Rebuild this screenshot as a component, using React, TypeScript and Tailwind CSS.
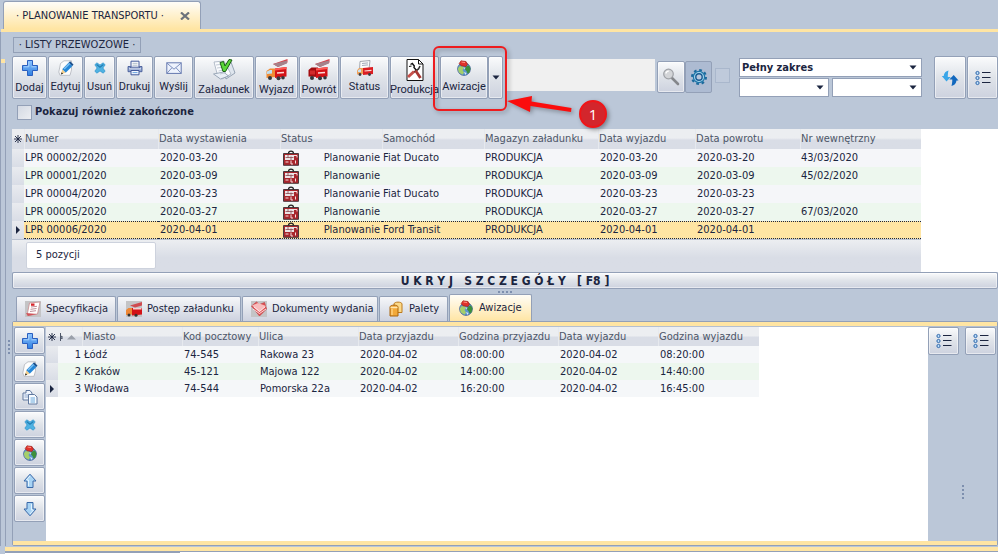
import { useState } from 'react';
import type { ReactNode } from 'react';

/* ---------- icons ---------- */

const PlusIcon = () => (
  <svg viewBox="0 0 18 18" className="w-[18px] h-[18px]">
    <defs>
      <linearGradient id="plusFill" x1="0" y1="0" x2="0" y2="1">
        <stop offset="0" stopColor="#8cc4ff" />
        <stop offset="1" stopColor="#2f7fe0" />
      </linearGradient>
    </defs>
    <path d="M6.5 1.5h5v5h5v5h-5v5h-5v-5h-5v-5h5z" fill="url(#plusFill)" stroke="#2a5fc0" strokeLinejoin="round" />
    <path d="M7.8 3v4.8H3M10.4 7.8H15" fill="none" stroke="#b5dcff" strokeWidth="0.8" />
  </svg>
);

const EditIcon = () => (
  <svg viewBox="0 0 16 16" className="w-4 h-4">
    <path d="M2.5 3.5 6 .8h7.5v9L12 15.3H2L.8 12z" fill="#fdfdfd" stroke="#b0b4bb" strokeWidth="0.8" />
    <path d="m4.2 9.3 6.6-6.9 3.6 3.5-6.7 6.8z" fill="#2587d8" />
    <path d="m5.6 8.6 6-6.2 1 1-6 6.2z" fill="#7cc0f2" />
    <path d="m10.8 2.4 1.3-1.1 3.4 3.3-1.1 1.3z" fill="#1a4f8c" />
    <path d="m4.2 9.3 3.5 3.4-4.6 1.6z" fill="#f3cf8d" />
    <path d="m3.6 12.3 1.5 1.4-2.2.8z" fill="#222" />
  </svg>
);

const CrossIcon = () => (
  <svg viewBox="0 0 14 14" className="w-3 h-4">
    <path d="M1 3.2 3.4 1 7 3.6 10.6 1 13 3.2 10.4 7 13 10.8 10.6 13 7 10.4 3.4 13 1 10.8 3.6 7z" fill="#4fb2e2" stroke="#2f93cb" strokeWidth="0.8" />
    <path d="M3 3 7 6l4-3" fill="none" stroke="#237eb4" strokeWidth="1.4" />
  </svg>
);

const PrintIcon = () => (
  <svg viewBox="0 0 16 16" className="w-4 h-4">
    <path d="M4 1.2h8v6H4z" fill="#fff" stroke="#42599a" />
    <path d="M5.5 3.3h5M5.5 5.2h5" stroke="#9ab" strokeWidth="0.8" />
    <path d="M1 6.5h2.5v2h9v-2H15v5.2H1z" fill="#8fa3cf" stroke="#3b5090" strokeWidth="0.8" />
    <path d="M2 8.8h12" stroke="#e4ebf8" />
    <path d="M4 10.5h8v4.3H4z" fill="#f2f7ff" stroke="#42599a" />
    <path d="M5.5 12.6h5" stroke="#6aa5e0" />
  </svg>
);

const MailIcon = () => (
  <svg viewBox="0 0 16 16" className="w-4 h-4">
    <rect x="0.8" y="2.8" width="14.4" height="10.6" fill="#eef3fd" stroke="#6478ae" />
    <path d="m1 3.2 7 6 7-6M1.2 13l4.7-5.2M14.8 13l-4.7-5.2" fill="none" stroke="#7184b8" strokeWidth="0.9" />
  </svg>
);

const LoadIcon = () => (
  <svg viewBox="0 0 24 24" className="w-6 h-6">
    <path d="m10 7 9-3 4 11-9 6z" fill="#dfe6ee" stroke="#8392a5" strokeWidth="0.8" />
    <path d="m2 4 10-1 7 13-9 5-4-2z" fill="#fbfcfe" stroke="#a2adbd" strokeWidth="0.8" />
    <path d="m1.500 16 7 5 8-3-5-4z" fill="#e9eef5" stroke="#8897aa" strokeWidth="0.8" />
    <path d="m4 7 4-.5M5 10l4-.5M6.500 13l5-1M8 16l6-1.500" stroke="#b2bdca" strokeWidth="0.8" />
    <path d="m8 4.500 3.500-1 1.500 4.500 4-6.500 3 .5-6.500 11.500h-2.500z" fill="#5bd63a" stroke="#1a5c14" />
  </svg>
);

const TruckOutIcon = () => (
  <svg viewBox="0 0 24 24" className="w-6 h-6">
    <path d="m8 6 14.500-5v3.500L13 9z" fill="#d8404a" />
    <path d="m8 6 14-3.500v3L13 9z" fill="#a5828a" />
    <path d="M1.500 13 5 10.500h5V19l-8.500 1z" fill="#ef8b35" />
    <path d="M2 13.500 5 12h2v3.500L2 16z" fill="#bfe0f2" />
    <path d="M10 10.500 21.500 9v9.500L10 20z" fill="#d31217" />
    <path d="m10 10.500 11.500-1.500v2L10 12.500z" fill="#ff5a54" />
    <path d="m12 15 7-.6" stroke="#ffd9d5" strokeWidth="1.500" />
    <circle cx="5" cy="20" r="2" fill="#34363c" />
    <circle cx="13.500" cy="20.300" r="2" fill="#34363c" />
    <circle cx="18" cy="19.800" r="1.800" fill="#34363c" />
  </svg>
);

const TruckInIcon = () => (
  <svg viewBox="0 0 24 24" className="w-6 h-6">
    <path d="m8 6 14.500-5v3.500L13 9z" fill="#d8404a" />
    <path d="m8 6 14-3.500v3L13 9z" fill="#a5828a" />
    <path d="m1.500 12 3-2.500H11V19l-9.500-.5z" fill="#a30d10" />
    <path d="M3 12.500h5v4H3z" fill="#d12b2b" />
    <path d="M9 10.500 20.500 9v9.500L9 20z" fill="#d31217" />
    <path d="m9 10.500 11.500-1.500v2L9 12.500z" fill="#ff5a54" />
    <path d="m11 15 7-.6" stroke="#ffd9d5" strokeWidth="1.500" />
    <circle cx="5" cy="20" r="2" fill="#34363c" />
    <circle cx="13" cy="20.300" r="2" fill="#34363c" />
    <circle cx="18" cy="19.800" r="1.800" fill="#34363c" />
  </svg>
);

const StatusIcon = () => (
  <svg viewBox="0 0 18 16" className="w-[18px] h-4">
    <path d="m4 1.500 10-1L13 9 3.500 10z" fill="#fafbfc" stroke="#8e949e" strokeWidth="0.8" />
    <path d="m6 3.500 6-.6M6 5.500l6-.6" stroke="#9aa3b2" strokeWidth="0.9" />
    <path d="M1 10.500 3 8h4v6l-6 .5z" fill="#f0a15a" />
    <path d="m2 10.500 1.500-1.300H5V12H2z" fill="#c5e4f5" />
    <path d="m7 8 10-1v7L7 15z" fill="#db1d22" />
    <path d="m8.500 11 7-.6" stroke="#ffd9d5" strokeWidth="1.200" />
    <circle cx="4" cy="14.500" r="1.400" fill="#3a3c42" />
    <circle cx="13.500" cy="14.500" r="1.400" fill="#3a3c42" />
  </svg>
);

const ProductionIcon = () => (
  <svg viewBox="0 0 24 24" className="w-6 h-6">
    <path d="M4 1.500h11.500L20 6v16.500H4z" fill="#fff" stroke="#111" />
    <path d="M15.500 1.500V6H20" fill="none" stroke="#111" />
    <path d="m7.500 6.500 1.800-1 2 2.500-.3 1.500 3 3.500" fill="none" stroke="#111" strokeWidth="1.400" />
    <path d="m17 8-1.500 3-5 3.500" fill="none" stroke="#333" strokeWidth="1.600" />
    <path d="m11 13.500-6 5.500" stroke="#c5504b" strokeWidth="3" />
    <path d="m12.500 12.500 5 7.500" stroke="#a83733" strokeWidth="2.800" />
    <path d="M6 8.500 8.500 8" stroke="#111" strokeWidth="1.200" />
  </svg>
);

const GlobeIcon = () => (
  <svg viewBox="0 0 16 16" className="w-4 h-4">
    <circle cx="8" cy="9" r="6.400" fill="#5c97cf" stroke="#33508a" strokeWidth="0.7" />
    <path d="M3 6.500 6 6l2 2-1.500 2L8 12.500l-1.500 2.300L3 12.500 1.800 9z" fill="#a5cf6a" />
    <path d="m10 6.500 3-1 1.500 3-1 4-2 1-1-2.500L9 9.500z" fill="#3c8f3c" />
    <path d="m8 12 2.500 1-1 2zM7.500 7l1.500 1-.8 1.500z" fill="#dce8f5" />
    <path d="M3.200 3.500 5 .8l5 .7 1.500 2.800L10 6.500l-5-.7z" fill="#e0332b" stroke="#97160f" strokeWidth="0.6" />
    <path d="m5.500 2 3.500.6" stroke="#ff9c8f" strokeWidth="0.9" />
  </svg>
);

const SearchIcon = () => (
  <svg viewBox="0 0 18 18" className="w-[18px] h-[18px]">
    <path d="m10 10 6 6" stroke="#85878b" strokeWidth="2.600" strokeLinecap="round" />
    <circle cx="6.500" cy="6" r="4.800" fill="#d3d5d8" stroke="#9fa2a7" strokeWidth="1.200" />
    <path d="M3.800 5.500a3 3 0 0 1 3-2.300" fill="none" stroke="#fff" strokeWidth="1.200" />
  </svg>
);

const GearIcon = () => (
  <svg viewBox="0 0 18 18" className="w-[18px] h-[18px]">
    <circle cx="9" cy="9" r="7" fill="none" stroke="#1c6a9c" strokeWidth="2" strokeDasharray="2.750 2.750" />
    <circle cx="9" cy="9" r="5.600" fill="#a5d8ef" stroke="#1f75a8" strokeWidth="1.200" />
    <circle cx="9" cy="9" r="3.200" fill="#b9c7dc" stroke="#1b5c93" strokeWidth="1.400" />
  </svg>
);

const RefreshIcon = () => (
  <svg viewBox="0 0 18 18" className="w-[18px] h-[18px]">
    <path d="M7.500 1.500C4.800 2 3 4 2.700 7H.8l4.700 5.500L9.800 8H6.800c0-2.500.2-4.500.7-6.500z" fill="#3aa6e8" />
    <path d="M10.500 17c2.700-.5 4.700-2.500 5-5.500h2L12.700 6 8.300 10.500h3c0 2.500-.3 4.500-.8 6.500z" fill="#1268be" />
  </svg>
);

const ListIcon = () => (
  <svg viewBox="0 0 16 16" className="w-4 h-4">
    {[3, 8, 13].map((y) => (
      <g key={y}>
        <circle cx="2.500" cy={y} r="1.600" fill="#bfe0fa" stroke="#2d66ab" />
        <path d={`M7 ${y - 0.5}h8.500`} stroke="#1b2540" />
      </g>
    ))}
  </svg>
);

const CopyIcon = () => (
  <svg viewBox="0 0 16 16" className="w-4 h-4">
    <path d="M1 4h3V1.500h4L10 4v7H1z" fill="#eef4fc" stroke="#60799f" />
    <path d="M2.500 6h5M2.500 8h5" stroke="#86a2c8" strokeWidth="0.9" />
    <path d="M6.500 5.500h6l2.500 2.500v7H6.500z" fill="#f7fbff" stroke="#60799f" />
    <path d="M8.500 9h4.500M8.500 11h4.500M8.500 13h4.500" stroke="#5a9fd8" strokeWidth="0.9" />
  </svg>
);

const ArrowIcon = ({ down = false }: { down?: boolean }) => (
  <svg viewBox="0 0 16 16" className={down ? 'w-4 h-4 rotate-180' : 'w-4 h-4'}>
    <path d="M8 1.200 14 8h-3v6.500H5V8H2z" fill="#a7d3f4" stroke="#3968a8" strokeLinejoin="round" />
    <path d="M8 3 4.500 7H6.500v6" fill="none" stroke="#e3f4ff" />
  </svg>
);

const CalendarIcon = () => (
  <svg viewBox="0 0 16 16" className="w-4 h-4">
    <path d="M.5 3.500h15v11.800H.5z" fill="#a8262c" stroke="#4a3a3e" />
    <path d="M5.500 3.500C5.500.3 10.500.3 10.500 3.500" fill="none" stroke="#222" strokeWidth="1.200" />
    <path d="M2 5h9v5H2z" fill="#ece4e6" />
    <path d="M2.500 7.500h8M5 5v3M8 6.500v3.500" stroke="#8d4a50" strokeWidth="0.8" />
    <path d="M11 5.500h3v2M2.500 12h3M8 10.500v3.500h2M12.500 10.500v3" stroke="#f4dede" fill="none" />
  </svg>
);

const SpecIcon = () => (
  <svg viewBox="0 0 16 16" className="w-4 h-4">
    <path d="M0 0h16v16H0z" fill="#c4c4c6" />
    <path d="M4.500 2 15 1l-2.500 12L2 14.500z" fill="#fff" stroke="#c98a8e" strokeWidth="0.8" />
    <path d="m6 6 6-.7M5.500 8.300l6-.8M5 10.500l6-.8" stroke="#b0707c" strokeWidth="0.8" />
    <path d="M6 2.500h3.500v2.300H6z" fill="#d8232a" />
    <path d="m1 12 11 1L3 15z" fill="#d0545a" />
  </svg>
);

const ProgressIcon = () => (
  <svg viewBox="0 0 16 16" className="w-4 h-4">
    <path d="M0 0h16v16H0z" fill="#c4c4c6" />
    <path d="M4 4.500 16 1v3.500L9 6.500z" fill="#cf4a50" />
    <path d="m0 9 2.500-2H6v6.500L0 14z" fill="#ee8736" />
    <path d="M6 7h10v6.500L6 14.500z" fill="#d31217" />
    <path d="M7 7.800h8.500" stroke="#fff" strokeWidth="1.200" />
    <circle cx="3" cy="14" r="1.500" fill="#333" />
    <circle cx="10" cy="14.300" r="1.500" fill="#333" />
  </svg>
);

const DocsIcon = () => (
  <svg viewBox="0 0 16 16" className="w-4 h-4">
    <path d="M0 0h16v16H0z" fill="#c4c4c6" />
    <path d="m.5 5 5-4 3 2.500 5-2 2 6.500-7 7z" fill="#e25256" stroke="#b8373b" strokeWidth="0.6" />
    <path d="M1 4.500 7 2l8 3-6.500 6z" fill="#f8bcbc" />
    <path d="m2 8 6.500 4.500L15 8M3 6l5.500 4.500L14 6" fill="none" stroke="#fff" strokeWidth="0.8" />
  </svg>
);

const PalletIcon = () => (
  <svg viewBox="0 0 16 16" className="w-4 h-4">
    <path d="M6 3c0-2.500 8-2.500 8 0v8.500H6z" fill="#fbd98a" stroke="#bd7a1c" />
    <path d="M2 6c0-2.500 8-2.500 8 0v9H2z" fill="#f2a93a" stroke="#a9640f" />
    <path d="M2.500 6.500h7" stroke="#ffe7b0" strokeWidth="1.500" />
    <path d="M4 8v6" stroke="#ffd68a" strokeWidth="1.300" />
  </svg>
);

const Caret = () => (
  <svg viewBox="0 0 8 5" className="w-2 h-[5px] pointer-events-none">
    <path d="M.5.500h7L4 4.500z" fill="#1b2540" />
  </svg>
);

const RowMarker = () => (
  <svg viewBox="0 0 4 8" className="w-1 h-2 mx-auto">
    <path d="M0 0v8l4-4z" fill="#1b2540" />
  </svg>
);

const StarMark = () => (
  <svg viewBox="0 0 8 8" className="w-2 h-2 mx-auto">
    <path d="M4 0v8M0 4h8M1 1l6 6M7 1 1 7" stroke="#1b2540" strokeWidth="0.9" />
  </svg>
);

/* ---------- building blocks ---------- */

const raised =
  'border border-[#93a0b7] rounded-[2px] bg-linear-to-b from-[#fafbfc] via-[#dfe3e9] to-[#cdd2df] shadow-[inset_0_0_0_1px_rgba(255,255,255,0.5)]';

type ToolButtonProps = { label: string; icon: ReactNode; width: string; tight?: boolean };

const ToolButton = ({ label, icon, width, tight }: ToolButtonProps) => (
  <button
    type="button"
    className={`${raised} ${width} ${tight ? '' : 'gap-[3px]'} shrink-0 h-[43px] flex flex-col items-center justify-center font-['Roboto',sans-serif] text-[11px] leading-4 whitespace-nowrap`}
  >
    {icon}
    <span>{label}</span>
  </button>
);

const IconButton = ({ label, icon, size }: { label: string; icon: ReactNode; size: string }) => (
  <button type="button" aria-label={label} className={`${raised} ${size} shrink-0 flex items-center justify-center`}>
    {icon}
  </button>
);

const Dots = ({ vertical = false }: { vertical?: boolean }) => (
  <div className={vertical ? 'flex flex-col gap-[2px]' : 'flex gap-[2px]'}>
    {[0, 1, 2, 3].map((i) => (
      <span key={i} className="w-[2px] h-[2px] bg-[#7d8fae]" />
    ))}
  </div>
);

const Picker = ({ label, options, className }: { label: string; options: string[]; className: string }) => (
  <div className={`relative flex ${className}`}>
    <select
      aria-label={label}
      className="w-full h-[19px] appearance-none border border-[#93a0b7] bg-white px-[2px] text-[11px] leading-4 font-bold"
    >
      {options.map((o) => (
        <option key={o}>{o}</option>
      ))}
    </select>
    <span className="absolute right-[5px] top-[7px] pointer-events-none">
      <Caret />
    </span>
  </div>
);

/* ---------- data ---------- */

const tools: ToolButtonProps[] = [
  { label: 'Dodaj', icon: <PlusIcon />, width: 'w-[35px]' },
  { label: 'Edytuj', icon: <EditIcon />, width: 'w-[35px]' },
  { label: 'Usuń', icon: <CrossIcon />, width: 'w-[31px]' },
  { label: 'Drukuj', icon: <PrintIcon />, width: 'w-[37px]' },
  { label: 'Wyślij', icon: <MailIcon />, width: 'w-[39px]' },
  { label: 'Załadunek', icon: <LoadIcon />, width: 'w-[60px]', tight: true },
  { label: 'Wyjazd', icon: <TruckOutIcon />, width: 'w-[43px]', tight: true },
  { label: 'Powrót', icon: <TruckInIcon />, width: 'w-[40px]', tight: true },
  { label: 'Status', icon: <StatusIcon />, width: 'w-[49px]' },
  { label: 'Produkcja', icon: <ProductionIcon />, width: 'w-[49px]', tight: true },
];

const waybills = [
  ['LPR 00002/2020', '2020-03-20', 'Fiat Ducato', '2020-03-20', '2020-03-20', '43/03/2020'],
  ['LPR 00001/2020', '2020-03-09', '', '2020-03-09', '2020-03-09', '45/02/2020'],
  ['LPR 00004/2020', '2020-03-23', 'Fiat Ducato', '2020-03-23', '2020-03-23', ''],
  ['LPR 00005/2020', '2020-03-27', '', '2020-03-27', '2020-03-27', '67/03/2020'],
  ['LPR 00006/2020', '2020-04-01', 'Ford Transit', '2020-04-01', '2020-04-01', ''],
];

const stops = [
  ['1', 'Łódź', '74-545', 'Rakowa 23', '2020-04-02', '08:00:00', '2020-04-02', '08:20:00'],
  ['2', 'Kraków', '45-121', 'Majowa 122', '2020-04-02', '14:00:00', '2020-04-02', '14:40:00'],
  ['3', 'Włodawa', '74-544', 'Pomorska 22a', '2020-04-02', '16:20:00', '2020-04-02', '16:45:00'],
];

const detailTabs = [
  { label: 'Specyfikacja', icon: <SpecIcon />, width: 'w-[100px]' },
  { label: 'Postęp załadunku', icon: <ProgressIcon />, width: 'w-[124px]' },
  { label: 'Dokumenty wydania', icon: <DocsIcon />, width: 'w-[136px]' },
  { label: 'Palety', icon: <PalletIcon />, width: 'w-[69px]' },
  { label: 'Awizacje', icon: <GlobeIcon />, width: 'w-[83px]' },
];

const headRow = 'bg-linear-to-b from-[#eceef1] from-45% to-[#d9dde6] to-55% text-[#4d5668]';
const headCell = 'p-0 font-normal text-left border-l border-[#e6e9ee] overflow-hidden';

/* ---------- sections ---------- */

const Toolbar = () => (
  <div className="flex items-start">
    <div className="flex gap-[1px] mr-[1px]">
      {tools.map((t) => (
        <ToolButton key={t.label} {...t} />
      ))}
    </div>

    <div className="relative flex mr-[2px]">
      <ToolButton label="Awizacje" icon={<GlobeIcon />} width="w-[48px]" />
      <button type="button" aria-label="Więcej" className={`${raised} w-[15px] flex items-center justify-center`}>
        <Caret />
      </button>

      {/* callout */}
      <svg viewBox="0 0 160 80" className="absolute -left-2 -top-3 w-[160px] h-[80px] max-w-none pointer-events-none z-10 drop-shadow-[2px_2px_2px_rgba(0,0,0,0.3)]">
        <rect x="2" y="3" width="72" height="63" rx="5" fill="none" stroke="#ee1c1f" strokeWidth="2" />
        <path d="m75 57 25-5-.5 5.500 40 6.500-.5 4-40.500-6-.5 6z" fill="#fb0d0d" />
      </svg>
      <span className="absolute left-[139px] top-[44px] z-10 w-7 h-7 rounded-full border-2 border-[#f01518] bg-[#d3262c] font-['Open_Sans',sans-serif] text-white text-[15px] leading-6 text-center shadow-[2px_2px_4px_rgba(0,0,0,0.35)]">
        1
      </span>
    </div>

    <div className="grow h-8 mt-[3px] bg-[#f0f0f0]" />

    <div className="flex mt-[5px] ml-[2px]">
      <IconButton label="Szukaj" icon={<SearchIcon />} size="w-[28px] h-[32px]" />
      <button type="button" aria-label="Ustawienia" className="w-[27px] h-[32px] border border-[#93a0b7] rounded-[2px] bg-[#adbbd2] flex items-center justify-center">
        <GearIcon />
      </button>
      <input type="checkbox" disabled aria-label="Filtr" className="appearance-none w-[15px] h-[15px] ml-[3px] mt-[7px] border border-[#a9b7cc] bg-[#bfcadb]" />
    </div>

    <div className="w-[183px] ml-[9px] mt-[2px] flex flex-col gap-[1px]">
      <Picker label="Zakres" options={['Pełny zakres']} className="w-full" />
      <div className="flex gap-[3px]">
        <Picker label="Od" options={['']} className="flex-1" />
        <Picker label="Do" options={['']} className="flex-1" />
      </div>
    </div>

    <div className="flex gap-[1px] ml-3">
      <IconButton label="Odśwież" icon={<RefreshIcon />} size="w-[32px] h-[43px]" />
      <IconButton label="Kolumny" icon={<ListIcon />} size="w-[31px] h-[43px]" />
    </div>
  </div>
);

const WaybillTable = () => (
  <div className="bg-white mt-[9px]">
    <div className="w-[909px]">
      <table className="w-full table-fixed border-separate border-spacing-0 leading-4 whitespace-nowrap">
        <colgroup>
          <col className="w-[12px]" />
          <col className="w-[134px]" />
          <col className="w-[122px]" />
          <col className="w-[45px]" />
          <col className="w-[57px]" />
          <col className="w-[102px]" />
          <col className="w-[114px]" />
          <col className="w-[97px]" />
          <col className="w-[105px]" />
          <col className="w-[121px]" />
        </colgroup>
        <thead>
          <tr className={`${headRow} h-[20px]`}>
            <th className="p-0" aria-label="Znacznik"><StarMark /></th>
            <th className={headCell}>Numer</th>
            <th className={headCell}>Data wystawienia</th>
            <th className={headCell} colSpan={2}>Status</th>
            <th className={headCell}>Samochód</th>
            <th className={headCell}>Magazyn załadunku</th>
            <th className={headCell}>Data wyjazdu</th>
            <th className={headCell}>Data powrotu</th>
            <th className={headCell}>Nr wewnętrzny</th>
          </tr>
        </thead>
        <tbody>
          {waybills.map(([no, issued, car, out, back, inner], i) => {
            const current = i === waybills.length - 1;
            const cell = current
              ? 'p-0 bg-[#ffe5a3] border-y border-dotted border-[#1b2540]'
              : i % 2
                ? 'p-0 bg-[#edf7ee]'
                : 'p-0 bg-[#f5f6f9]';
            return (
              <tr key={no} className="h-[18px]">
                <td className="p-0 bg-linear-to-b from-[#e9ebef] to-[#d9dde6]">{current && <RowMarker />}</td>
                <td className={`${cell} pl-[1px]`}>{no}</td>
                <td className={`${cell} pl-[2px]`}>{issued}</td>
                <td className={`${cell} pl-[3px]`}><CalendarIcon /></td>
                <td className={`${cell} pr-[2px]`}>
                  <div className="flex justify-end">Planowanie</div>
                </td>
                <td className={`${cell} pl-[1px]`}>{car}</td>
                <td className={`${cell} pl-[1px]`}>PRODUKCJA</td>
                <td className={`${cell} pl-[2px]`}>{out}</td>
                <td className={`${cell} pl-[2px]`}>{back}</td>
                <td className={`${cell} pl-[1px]`}>{inner}</td>
              </tr>
            );
          })}
        </tbody>
      </table>
      <div className="h-[33px] border-t border-[#b9c1d0] pt-[2px] pl-[14px] bg-linear-to-b from-[#eceef1] to-[#d9dde6] to-55%">
        <div className="w-[130px] h-[27px] bg-white border border-[#cdd2dd] rounded-[2px] pl-[9px] leading-6">5 pozycji</div>
      </div>
    </div>
  </div>
);

const StopTable = () => (
  <table className="w-[713px] table-fixed border-separate border-spacing-0 leading-4 whitespace-nowrap">
    <colgroup>
      <col className="w-[12px]" />
      <col className="w-[24px]" />
      <col className="w-[100px]" />
      <col className="w-[76px]" />
      <col className="w-[100px]" />
      <col className="w-[100px]" />
      <col className="w-[100px]" />
      <col className="w-[100px]" />
      <col className="w-[101px]" />
    </colgroup>
    <thead>
      <tr className={`${headRow} h-[19px]`}>
        <th className="p-0" aria-label="Znacznik"><StarMark /></th>
        <th className="p-0" aria-label="Kolejność">
          <svg viewBox="0 0 24 8" className="w-6 h-2">
            <path d="M2.500 0v8M2.500 4 4 3v3z" stroke="#4d5668" fill="none" />
            <path d="M9 6.500h9L13.500 2z" fill="#9aa0aa" />
          </svg>
        </th>
        <th className={headCell}>Miasto</th>
        <th className={headCell}>Kod pocztowy</th>
        <th className={headCell}>Ulica</th>
        <th className={headCell}>Data przyjazdu</th>
        <th className={headCell}>Godzina przyjazdu</th>
        <th className={headCell}>Data wyjazdu</th>
        <th className={headCell}>Godzina wyjazdu</th>
      </tr>
    </thead>
    <tbody>
      {stops.map(([no, ...rest], i) => {
        const tone = i % 2 ? 'bg-[#edf7ee]' : 'bg-[#f5f7f9]';
        return (
          <tr key={no} className="h-[17px]">
            <td className="p-0 bg-linear-to-b from-[#e9ebef] to-[#d9dde6]">{i === 2 && <RowMarker />}</td>
            <td className={`p-0 pr-[1px] text-right ${tone}`}>{no}</td>
            {rest.map((value, j) => (
              <td key={j} className={`p-0 pl-[2px] ${tone}`}>{value}</td>
            ))}
          </tr>
        );
      })}
    </tbody>
  </table>
);

const Details = () => {
  const [active, setActive] = useState('Awizacje');

  return (
    <>
      <div className="flex items-end h-[27px] pl-1 gap-[1px]">
        {detailTabs.map((t) => (
          <button
            key={t.label}
            type="button"
            onClick={() => setActive(t.label)}
            className={`${t.width} shrink-0 flex items-center gap-[5px] pl-2 border border-b-0 border-[#93a0b7] rounded-t-[2px] whitespace-nowrap ${
              active === t.label
                ? 'h-[27px] bg-linear-to-b from-[#fffdf6] to-[#ffe5a3]'
                : 'h-[25px] bg-linear-to-b from-[#f6f7f9] to-[#cdd2df]'
            }`}
          >
            {t.icon}
            <span>{t.label}</span>
          </button>
        ))}
      </div>

      <div className="grow flex flex-col border border-[#93a0b7] rounded-[2px]">
        <div className="h-1 bg-[#ffe5a3]" />
        <div className="grow flex border-t border-[#b3bfd1]">
          <div className="w-[33px] pl-[1px] flex flex-col gap-[1px]">
            <IconButton label="Dodaj" icon={<PlusIcon />} size="w-[31px] h-[27px]" />
            <IconButton label="Edytuj" icon={<EditIcon />} size="w-[31px] h-[27px]" />
            <IconButton label="Kopiuj" icon={<CopyIcon />} size="w-[31px] h-[27px]" />
            <IconButton label="Usuń" icon={<CrossIcon />} size="w-[31px] h-[27px]" />
            <IconButton label="Mapa" icon={<GlobeIcon />} size="w-[31px] h-[27px]" />
            <IconButton label="W górę" icon={<ArrowIcon />} size="w-[31px] h-[27px]" />
            <IconButton label="W dół" icon={<ArrowIcon down />} size="w-[31px] h-[27px]" />
          </div>
          <div className="grow bg-white">
            <StopTable />
          </div>
          <div className="w-[69px] flex flex-col items-center justify-between pb-[42px]">
            <div className="w-full flex justify-between pr-[1px]">
              <IconButton label="Kolumny" icon={<ListIcon />} size="w-[31px] h-[28px]" />
              <IconButton label="Widok" icon={<ListIcon />} size="w-[31px] h-[28px]" />
            </div>
            <Dots vertical />
          </div>
        </div>
        <div className="h-1 bg-[#ffe5a3]" />
      </div>
    </>
  );
};

const App = () => (
  <div className="min-h-screen flex flex-col bg-[#bbc7d8] text-[#1b2540] text-[11px] leading-4 font-['DejaVu_Sans_Condensed','DejaVu_Sans',sans-serif]">
    {/* window tab */}
    <div className="flex pl-[3px] pt-[1px]">
      <div className="w-[198px] h-7 flex items-center justify-between pl-3 pr-[10px] border border-b-0 border-[#93a0b7] rounded-t-[3px] bg-linear-to-b from-[#fffdf8] via-[#fff1cd] to-[#ffe5a3]">
        <span className="whitespace-nowrap">· PLANOWANIE TRANSPORTU ·</span>
        <button type="button" aria-label="Zamknij">
          <svg viewBox="0 0 10 8" className="w-[10px] h-2">
            <path d="m1 .5 8 7M9 .5l-8 7" stroke="#6d727b" strokeWidth="2.200" />
          </svg>
        </button>
      </div>
    </div>
    <div className="h-[3px] ml-[1px] bg-[#ffe5a3]" />

    <div className="grow flex">
      {/* left splitter */}
      <div className="w-3 shrink-0 flex flex-col border-l border-[#93a0b7]">
        <div className="h-[27px]" />
        <div className="w-1 h-1 bg-[#ffe5a3]" />
        <div className="grow ml-1 border-l border-[#93a0b7] flex flex-col pl-[2px] pt-[277px]">
          <Dots vertical />
        </div>
      </div>

      <main className="grow min-w-0 flex flex-col pt-[5px]">
        <div className="flex">
          <h1 className="ml-[1px] w-[128px] h-4 border border-[#93a0b7] leading-[14px] text-center whitespace-nowrap">· LISTY PRZEWOZOWE ·</h1>
        </div>
        <div className="mt-[3px]">
          <Toolbar />
        </div>
        <label className="mt-[5px] pl-[5px] h-4 flex items-center gap-[3px] font-bold">
          <input type="checkbox" className="appearance-none w-[15px] h-[15px] border border-[#93a0b7] bg-linear-to-br from-[#d3d9e3] to-[#eceef2]" />
          Pokazuj również zakończone
        </label>

        <WaybillTable />

        <button type="button" className={`${raised} h-[17px] text-[12px] leading-[14px] font-bold whitespace-pre`}>
          U K R Y J   S Z C Z E G Ó Ł Y   [ F8 ]
        </button>
        <div className="h-[5px] flex justify-center items-center">
          <Dots />
        </div>

        <Details />
      </main>
    </div>

    <div className="ml-[5px] mt-[1px] h-[5px] bg-[#ffe5a3] border-b border-[#93a0b7]" />
    <div className="ml-[5px] h-[2px] bg-white">
      <div className="w-[175px] h-[1px] bg-[#93a0b7]" />
    </div>
  </div>
);

export default App;
